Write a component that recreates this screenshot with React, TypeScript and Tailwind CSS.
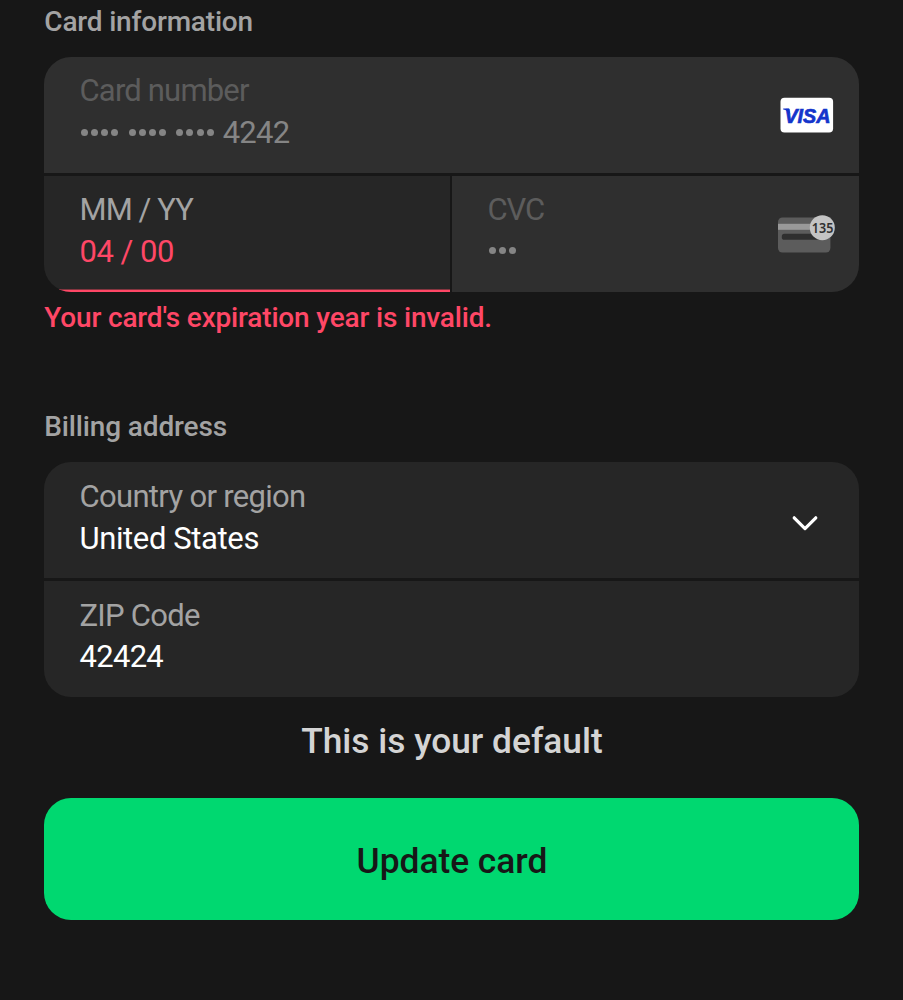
import React from "react";

type FieldProps = {
  label: string;
  labelClass?: string;
  className?: string;
  icon?: React.ReactNode;
  children: React.ReactNode;
};

function Field({ label, labelClass = "tracking-[-0.68px] text-[#a3a3a3]", className = "", icon, children }: FieldProps) {
  return (
    <div className={`flex items-center justify-between pl-[35.2px] ${className}`}>
      <div className="-mt-[5.6px] text-[31px] leading-[42px] whitespace-nowrap">
        <div className={labelClass}>{label}</div>
        <div className="h-[42px]">{children}</div>
      </div>
      {icon}
    </div>
  );
}

function Dots({ count }: { count: number }) {
  return (
    <span className="flex gap-[3.1px]">
      {Array.from({ length: count }, (_, i) => (
        <span key={i} className="size-[7px] rounded-full bg-[#858585]" />
      ))}
    </span>
  );
}

function VisaIcon() {
  return (
    <svg className="mr-[24.6px] h-[36px] w-[54px] shrink-0" viewBox="0 0 54 36">
      <rect x="0.5" y="0.7" width="52.6" height="34.8" rx="4" fill="#fff" />
      <path d="M3.2 11.6H8.9L10.4 17.5Q7.8 13.1 3.2 12.4Z" fill="#1434cb" />
      <text
        x="4.4"
        y="26"
        fontFamily="Liberation Sans, sans-serif"
        fontWeight="700"
        fontStyle="italic"
        fontSize="20"
        textLength="46"
        lengthAdjust="spacingAndGlyphs"
        fill="#1434cb"
        stroke="#1434cb"
        strokeWidth="0.7"
      >
        VISA
      </text>
    </svg>
  );
}

function CvcIcon() {
  return (
    <svg className="mr-[23.3px] h-[40px] w-[58px] shrink-0 overflow-visible" viewBox="0 0 58 40">
      <rect x="1" y="3.5" width="52.4" height="35" rx="4.5" fill="#5c5c5c" />
      <rect x="1" y="9.8" width="52.4" height="6" fill="#999" />
      <rect x="4.8" y="19.8" width="44" height="6" rx="2.6" fill="#2f2f2f" />
      <circle cx="45.3" cy="13.7" r="12.5" fill="#c4c4c4" />
      <text
        x="34.8"
        y="19"
        fontFamily="Noto Sans, sans-serif"
        fontWeight="600"
        fontSize="15"
        textLength="21.6"
        lengthAdjust="spacingAndGlyphs"
        fill="#303030"
      >
        135
      </text>
    </svg>
  );
}

export default function App() {
  return (
    <main className="h-[1000px] overflow-hidden bg-[#171717] pr-[44.4px] pl-[44.3px] font-[Roboto,sans-serif]">
      <h2 className="h-[57px] pt-[5px] text-[28px] leading-[33px] font-medium tracking-[-0.18px] text-[#a3a3a3]">
        Card information
      </h2>
      <section className="flex h-[235px] flex-col gap-[2.4px] overflow-hidden rounded-[27px]">
        <Field
          label="Card number"
          labelClass="tracking-[-0.82px] text-[#5c5c5c]"
          className="flex-1 bg-[#2f2f2f]"
          icon={<VisaIcon />}
        >
          <div className="flex items-center text-[#858585]">
            <span className="-mt-[2px] flex gap-[10.5px] pl-[1.3px]">
              <Dots count={4} />
              <Dots count={4} />
              <Dots count={4} />
            </span>
            <span className="pl-[9px] tracking-[-0.7px]">4242</span>
          </div>
        </Field>
        <div className="flex flex-1 gap-[2.3px]">
          <Field
            label="MM / YY"
            labelClass="tracking-[-0.9px] text-[#a3a3a3]"
            className="relative w-[405.6px] bg-[#262626]"
          >
            <span className="tracking-[-0.5px] text-[#ff4766]">04 / 00</span>
            <span className="absolute bottom-0 left-0 h-[3px] w-full border-t border-[#83353f] bg-[#ff4766]" />
          </Field>
          <Field
            label="CVC"
            labelClass="tracking-[-1px] text-[#5c5c5c]"
            className="flex-1 bg-[#2f2f2f]"
            icon={<CvcIcon />}
          >
            <div className="flex h-[39px] items-center pl-[1.6px]">
              <Dots count={3} />
            </div>
          </Field>
        </div>
      </section>
      <p className="mt-[9px] text-[28px] leading-[33px] font-medium tracking-[-0.17px] text-[#ff4766]">
        Your card's expiration year is invalid.
      </p>
      <h2 className="mt-[76px] h-[52.3px] text-[28px] leading-[33px] font-medium tracking-[-0.14px] text-[#a3a3a3]">
        Billing address
      </h2>
      <section className="flex h-[234.7px] flex-col gap-[2.4px] overflow-hidden rounded-[27px]">
        <Field
          label="Country or region"
          className="flex-1 bg-[#262626]"
          icon={
            <svg className="mt-[6px] mr-[39.4px] h-[18px] w-[28px] shrink-0" viewBox="0 0 28 18" fill="none">
              <path d="M3.2 3.8L14 14.6L24.8 3.8" stroke="#fff" strokeWidth="3.2" strokeLinecap="round" strokeLinejoin="round" />
            </svg>
          }
        >
          <span className="tracking-[-0.38px] text-white">United States</span>
        </Field>
        <Field
          label="ZIP Code"
          labelClass="-mb-[0.5px] pt-[0.5px] tracking-[-0.72px] text-[#a3a3a3]"
          className="flex-1 bg-[#262626]"
        >
          <span className="tracking-[-0.7px] text-white">42424</span>
        </Field>
      </section>
      <p className="mt-[22.6px] h-[78px] pl-[1px] text-center text-[35.3px] leading-[42px] font-medium text-[#d4d4d4]">
        This is your default
      </p>
      <button className="block h-[122.6px] w-full rounded-[27px] bg-[#00d870] pt-[6px] pl-[1px] text-[35.3px] font-medium text-[#171717]">
        Update card
      </button>
    </main>
  );
}
